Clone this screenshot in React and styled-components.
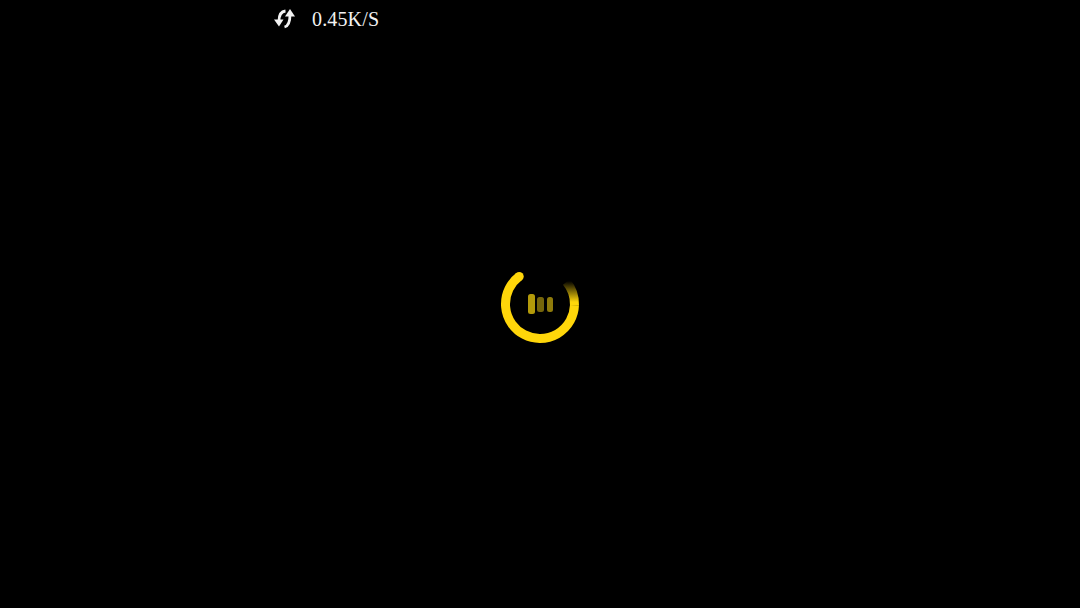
import React from "react"
import styled, { createGlobalStyle } from "styled-components"

const GlobalStyle = createGlobalStyle`
  html, body {
    margin: 0;
    background: #000;
  }
`

const Screen = styled.div`
  width: 1080px;
  height: 608px;
  background: #000;
  display: grid;
  grid-template-rows: 38px 1fr;
  overflow: hidden;
`

const StatusBar = styled.div`
  display: flex;
  align-items: center;
  padding-left: 273px;
  gap: 17px;
  color: #f2f2f2;
`

const Speed = styled.span`
  font-family: "Liberation Serif", "Times New Roman", serif;
  font-size: 20px;
  letter-spacing: 0.15px;
`

const Center = styled.div`
  display: flex;
  align-items: center;
  justify-content: center;
  padding-bottom: 38px;
`

const Loader = styled.div`
  width: 80px;
  height: 80px;
  display: flex;
  align-items: center;
  justify-content: center;
  gap: 2.5px;
  position: relative;
`

const Ring = styled.svg`
  position: absolute;
  inset: 0;
`

const Bar = styled.span`
  width: ${(p) => p.$w}px;
  height: ${(p) => p.$h}px;
  border-radius: 2.5px;
  background: ${(p) => p.$c};
`

const SwapIcon = () => (
  <svg width="22" height="22" viewBox="0 0 22 22" fill="none">
    <path d="M6 13C6 7 8 3.5 12.5 3" stroke="#f2f2f2" strokeWidth="2.8" />
    <path d="M6 18.5L1 11.5H10.5Z" fill="#f2f2f2" />
    <path d="M17 7C17 14 15.5 18 11.5 19" stroke="#f2f2f2" strokeWidth="2.8" />
    <path d="M17 1L22 8.5H12Z" fill="#f2f2f2" />
  </svg>
)

// arc goes counter-clockwise from the bright head at top left round to the faded tail at top right
const polar = (deg, r = 34.5) => {
  const a = (deg * Math.PI) / 180
  return [40 + r * Math.sin(a), 40 - r * Math.cos(a)]
}

const arc = (from, to) => {
  const [x1, y1] = polar(from)
  const [x2, y2] = polar(to)
  return `M${x1.toFixed(2)} ${y1.toFixed(2)}A34.5 34.5 0 ${Math.abs(to - from) > 180 ? 1 : 0} 0 ${x2.toFixed(2)} ${y2.toFixed(2)}`
}

const [headX, headY] = polar(-37)

const App = () => (
  <Screen>
    <GlobalStyle />
    <StatusBar>
      <SwapIcon />
      <Speed>0.45K/S</Speed>
    </StatusBar>
    <Center>
      <Loader>
        <Ring width="80" height="80" viewBox="0 0 80 80" fill="none">
          <defs>
            <linearGradient id="tailFade" gradientUnits="userSpaceOnUse" x1="0" y1="38" x2="0" y2="17">
              <stop offset="0" stopColor="#ffd60a" />
              <stop offset="1" stopColor="#ffd60a" stopOpacity="0" />
            </linearGradient>
          </defs>
          <path d={arc(-37, -268)} stroke="#ffd60a" strokeWidth="9" />
          <circle cx={headX} cy={headY} r="4.5" fill="#ffd60a" />
          <path d={arc(92, 50)} stroke="url(#tailFade)" strokeWidth="9" />
        </Ring>
        <Bar $w={7} $h={20} $c="#b39a0a" />
        <Bar $w={7} $h={15} $c="#75650c" />
        <Bar $w={6} $h={15} $c="#8f7b0b" />
      </Loader>
    </Center>
  </Screen>
)

export default App
